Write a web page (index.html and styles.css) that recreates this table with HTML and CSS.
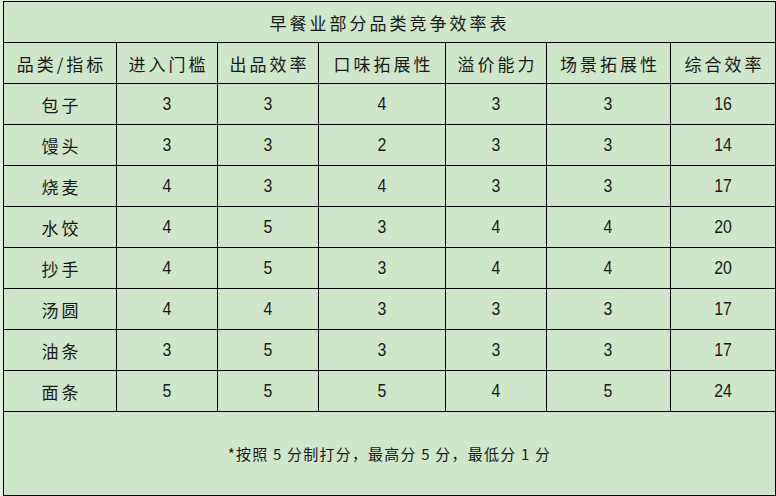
FILE: index.html
```html
<!DOCTYPE html>
<html lang="zh-CN">
<head>
<meta charset="utf-8">
<title>早餐业部分品类竞争效率表</title>
<link rel="stylesheet" href="styles.css">
</head>
<body>
<div class="page">
  <table class="sheet">
    <colgroup>
      <col class="c1"><col class="c2"><col class="c3"><col class="c4"><col class="c5"><col class="c6"><col class="c7">
    </colgroup>
    <thead>
      <tr class="title-row"><th colspan="7" class="title">早餐业部分品类竞争效率表</th></tr>
      <tr class="head-row">
        <th class="cjk">品类/指标</th>
        <th class="cjk">进入门槛</th>
        <th class="cjk">出品效率</th>
        <th class="cjk">口味拓展性</th>
        <th class="cjk">溢价能力</th>
        <th class="cjk">场景拓展性</th>
        <th class="cjk">综合效率</th>
      </tr>
    </thead>
    <tbody>
      <tr><td class="cjk">包子</td><td><span class="num">3</span></td><td><span class="num">3</span></td><td><span class="num">4</span></td><td><span class="num">3</span></td><td><span class="num">3</span></td><td><span class="num">16</span></td></tr>
      <tr><td class="cjk">馒头</td><td><span class="num">3</span></td><td><span class="num">3</span></td><td><span class="num">2</span></td><td><span class="num">3</span></td><td><span class="num">3</span></td><td><span class="num">14</span></td></tr>
      <tr><td class="cjk">烧麦</td><td><span class="num">4</span></td><td><span class="num">3</span></td><td><span class="num">4</span></td><td><span class="num">3</span></td><td><span class="num">3</span></td><td><span class="num">17</span></td></tr>
      <tr><td class="cjk">水饺</td><td><span class="num">4</span></td><td><span class="num">5</span></td><td><span class="num">3</span></td><td><span class="num">4</span></td><td><span class="num">4</span></td><td><span class="num">20</span></td></tr>
      <tr><td class="cjk">抄手</td><td><span class="num">4</span></td><td><span class="num">5</span></td><td><span class="num">3</span></td><td><span class="num">4</span></td><td><span class="num">4</span></td><td><span class="num">20</span></td></tr>
      <tr><td class="cjk">汤圆</td><td><span class="num">4</span></td><td><span class="num">4</span></td><td><span class="num">3</span></td><td><span class="num">3</span></td><td><span class="num">3</span></td><td><span class="num">17</span></td></tr>
      <tr><td class="cjk">油条</td><td><span class="num">3</span></td><td><span class="num">5</span></td><td><span class="num">3</span></td><td><span class="num">3</span></td><td><span class="num">3</span></td><td><span class="num">17</span></td></tr>
      <tr><td class="cjk">面条</td><td><span class="num">5</span></td><td><span class="num">5</span></td><td><span class="num">5</span></td><td><span class="num">4</span></td><td><span class="num">5</span></td><td><span class="num">24</span></td></tr>
      <tr class="note-row"><td colspan="7" class="note">*按照 5 分制打分，最高分 5 分，最低分 1 分</td></tr>
    </tbody>
  </table>
</div>
</body>
</html>
```

FILE: styles.css
```css
html, body {
  margin: 0;
  padding: 0;
  background: #e2efdf;
}

.page {
  padding: 1px 0 0 3px;
}

.sheet {
  border-collapse: collapse;
  table-layout: fixed;
  width: 772px;
  background: #cfe6ca;
  color: #1a1a1a;
  font-family: "Noto Sans CJK SC", "Noto Sans", sans-serif;
}

.c1 { width: 113px; }
.c2 { width: 101px; }
.c3 { width: 101px; }
.c4 { width: 127px; }
.c5 { width: 101px; }
.c6 { width: 124px; }
.c7 { width: 105px; }

.sheet th,
.sheet td {
  border: 1px solid #000;
  padding: 0;
  text-align: center;
  vertical-align: middle;
  font-weight: 400;
  line-height: 1;
}

.title-row { height: 41px; }
.head-row { height: 41px; }
.sheet tbody tr { height: 41px; }
.sheet tbody tr.note-row { height: 84px; }

.title,
.cjk {
  font-size: 17px;
  letter-spacing: 3px;
  text-indent: 3px;
}

.title {
  text-indent: 0;
  padding-right: 2px;
}

.num {
  display: inline-block;
  font-family: "Liberation Sans", Arial, sans-serif;
  font-size: 18px;
  transform: scaleX(0.88);
}

.note {
  font-size: 15px;
  letter-spacing: 1.2px;
}
```
